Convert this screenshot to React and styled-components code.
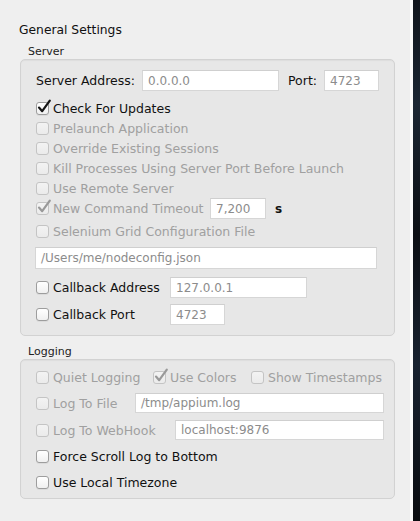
import React from 'react'
import styled, { createGlobalStyle } from 'styled-components'

const GlobalStyle = createGlobalStyle`
  html, body {
    margin: 0;
    padding: 0;
    background: #efefef;
  }
  body {
    font-family: "DejaVu Sans", "Liberation Sans", sans-serif;
    -webkit-font-smoothing: antialiased;
  }
`

const Screen = styled.div`
  display: flex;
  width: 420px;
  height: 521px;
  overflow: hidden;
`

const Window = styled.div`
  width: 410px;
  height: 521px;
  background: #efefef;
  border-right: 3px solid #f9f9f9;
  box-sizing: content-box;
`

const Edge = styled.div`
  flex: 1;
  background: linear-gradient(180deg, #10151c 0%, #1b2633 20%, #0c0f14 45%, #182230 70%, #0a0c10 100%);
`

const Title = styled.div`
  margin: 20px 0 0 19px;
  height: 20px;
  line-height: 20px;
  font-size: 12.3px;
  color: #111;
`

const GroupLabel = styled.div`
  margin: ${(p) => p.$mt}px 0 0 28px;
  height: 14px;
  line-height: 14px;
  font-size: 11px;
  color: #222;
`

const Group = styled.div`
  margin: 0 0 0 20px;
  width: 375px;
  height: ${(p) => p.$h}px;
  box-sizing: border-box;
  padding: ${(p) => p.$pt}px 0 0 15px;
  border: 1px solid #d2d2d2;
  border-radius: 5px;
  background: #e7e7e7;
  box-shadow: inset 0 1px 1px rgba(0, 0, 0, 0.04);
`

const Row = styled.div`
  display: flex;
  align-items: center;
  height: ${(p) => p.$h || 20}px;
  margin-top: ${(p) => p.$mt || 0}px;
`

const Label = styled.span`
  display: inline-block;
  width: ${(p) => (p.$w ? `${p.$w}px` : 'auto')};
  flex-shrink: 0;
  font-size: 12.5px;
  white-space: nowrap;
  color: ${(p) => (p.$off ? '#a0a0a0' : '#111')};
  margin-left: ${(p) => p.$ml || 0}px;
`

const Unit = styled.span`
  margin-left: 9px;
  font-size: 12px;
  font-weight: bold;
  color: #111;
`

const Input = styled.div`
  width: ${(p) => p.$w}px;
  height: ${(p) => p.$h || 21}px;
  margin-left: ${(p) => p.$ml || 0}px;
  box-sizing: border-box;
  flex-shrink: 0;
  display: flex;
  align-items: center;
  padding-left: 5px;
  background: #ffffff;
  border: 1px solid #d6d6d6;
  border-top-color: #cfcfcf;
  font-size: 12px;
  color: #8c8c8c;
  white-space: nowrap;
  overflow: hidden;
`

const Box = styled.span`
  position: relative;
  display: inline-block;
  flex-shrink: 0;
  width: 13px;
  height: 13px;
  box-sizing: border-box;
  margin-left: ${(p) => p.$ml || 0}px;
  margin-right: 4px;
  border: 1px solid ${(p) => (p.$off ? '#c4c4c4' : '#9d9d9d')};
  border-radius: 3px;
  background: ${(p) =>
    p.$off ? 'linear-gradient(#f3f3f3, #ebebeb)' : 'linear-gradient(#ffffff, #f0f0f0)'};
  box-shadow: ${(p) => (p.$off ? 'none' : '0 1px 0 rgba(0,0,0,0.05)')};

  svg {
    position: absolute;
    left: 0;
    top: -4px;
  }
`

const Check = ({ on, off, ml }) => (
  <Box $off={off} $ml={ml}>
    {on && (
      <svg width="15" height="15" viewBox="0 0 15 15">
        <path
          d="M2 8.6 L5.2 12.2 L12.8 1.6"
          fill="none"
          stroke={off ? '#999999' : '#161616'}
          strokeWidth="2.2"
          strokeLinecap="round"
          strokeLinejoin="round"
        />
      </svg>
    )}
  </Box>
)

const CheckItem = ({ label, on, off, w, ml }) => (
  <>
    <Check on={on} off={off} ml={ml} />
    <Label $off={off} $w={w}>{label}</Label>
  </>
)

export default function App() {
  return (
    <>
      <GlobalStyle />
      <Screen>
        <Window>
          <Title>General Settings</Title>

          <GroupLabel $mt={5}>Server</GroupLabel>
          <Group $h={277} $pt={10}>
            <Row $h={21}>
              <Label $w={106}>Server Address:</Label>
              <Input $w={137}>0.0.0.0</Input>
              <Label $ml={9} $w={36}>Port:</Label>
              <Input $w={55}>4723</Input>
            </Row>
            <Row $mt={7}>
              <CheckItem label="Check For Updates" on />
            </Row>
            <Row>
              <CheckItem label="Prelaunch Application" off />
            </Row>
            <Row>
              <CheckItem label="Override Existing Sessions" off />
            </Row>
            <Row>
              <CheckItem label="Kill Processes Using Server Port Before Launch" off />
            </Row>
            <Row>
              <CheckItem label="Use Remote Server" off />
            </Row>
            <Row $h={21}>
              <CheckItem label="New Command Timeout" on off w={157} />
              <Input $w={56}>7,200</Input>
              <Unit>s</Unit>
            </Row>
            <Row $mt={2}>
              <CheckItem label="Selenium Grid Configuration File" off />
            </Row>
            <Row $h={22} $mt={6}>
              <Input $w={342} $h={22} style={{ marginLeft: -1 }}>/Users/me/nodeconfig.json</Input>
            </Row>
            <Row $h={21} $mt={8}>
              <CheckItem label="Callback Address" w={117} />
              <Input $w={137}>127.0.0.1</Input>
            </Row>
            <Row $h={21} $mt={6}>
              <CheckItem label="Callback Port" w={117} />
              <Input $w={55}>4723</Input>
            </Row>
          </Group>

          <GroupLabel $mt={9}>Logging</GroupLabel>
          <Group $h={140} $pt={7}>
            <Row>
              <CheckItem label="Quiet Logging" off w={100} />
              <CheckItem label="Use Colors" on off w={81} />
              <CheckItem label="Show Timestamps" off />
            </Row>
            <Row $mt={6}>
              <CheckItem label="Log To File" off w={82} />
              <Input $w={249} $h={20}>/tmp/appium.log</Input>
            </Row>
            <Row $mt={7}>
              <CheckItem label="Log To WebHook" off w={122} />
              <Input $w={209} $h={20}>localhost:9876</Input>
            </Row>
            <Row $mt={6}>
              <CheckItem label="Force Scroll Log to Bottom" />
            </Row>
            <Row $mt={6}>
              <CheckItem label="Use Local Timezone" />
            </Row>
          </Group>
        </Window>
        <Edge />
      </Screen>
    </>
  )
}
